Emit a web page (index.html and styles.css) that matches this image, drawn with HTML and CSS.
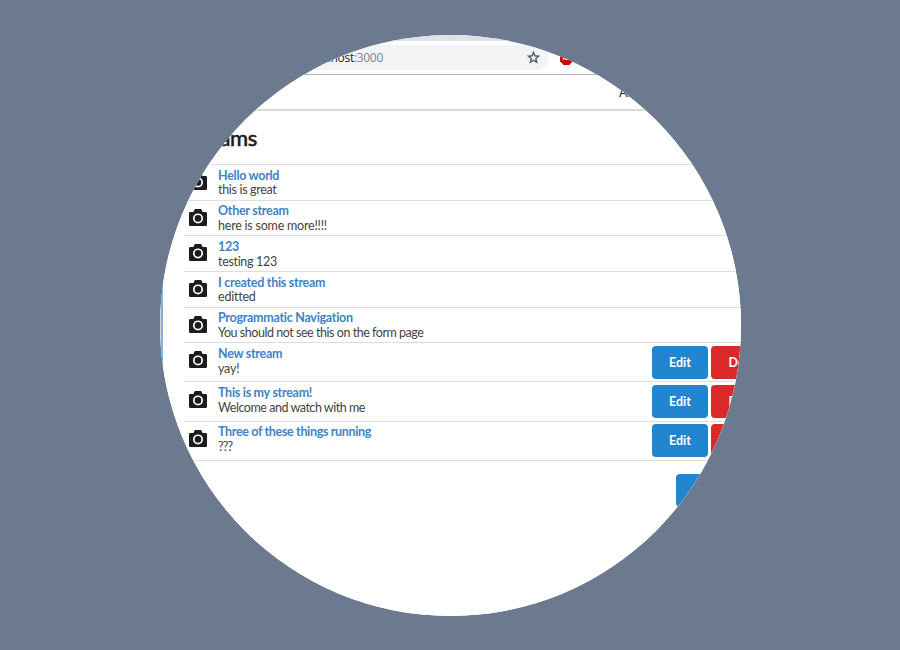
FILE: index.html
```html
<!DOCTYPE html>
<html lang="en">
<head>
<meta charset="utf-8">
<title>Streams</title>
<link rel="stylesheet" href="styles.css">
</head>
<body>
<svg class="defs" width="0" height="0">
  <symbol id="camera" viewBox="0 0 18 17">
    <path fill-rule="evenodd" fill="#1b1c1d" d="M1.3 3H4.4L5.4.8Q5.7.1 6.4.1H11.6Q12.3.1 12.6.8L13.6 3H16.7Q18 3 18 4.3V15.7Q18 17 16.7 17H1.3Q0 17 0 15.7V4.3Q0 3 1.3 3ZM9 4.4A5 5 0 1 0 9 14.4A5 5 0 1 0 9 4.4ZM9 6.1A3.3 3.3 0 1 1 9 12.7A3.3 3.3 0 1 1 9 6.1Z"/>
  </symbol>
</svg>
<div class="lens">
  <div class="tabs"></div>
  <div class="toolbar">
    <div class="address"><span class="url">localhost<span class="port">:3000</span></span>
      <svg class="star" viewBox="0 0 24 24"><path fill="#4f5358" stroke="#4f5358" stroke-width=".6" d="M22 9.24l-7.19-.62L12 2 9.19 8.63 2 9.24l5.46 4.73L5.82 21 12 17.27 18.18 21l-1.63-7.03L22 9.24zM12 15.4l-3.76 2.27 1-4.28-3.32-2.88 4.38-.38L12 6.1l1.71 4.04 4.38.38-3.32 2.88 1 4.28L12 15.4z"/></svg>
    </div>
    <svg class="blocker" viewBox="0 0 14 14"><path fill="#d00000" d="M4 0H10L14 4V10L10 14H4L0 10V4Z"/><path fill="none" stroke="#fff" stroke-width="1.3" d="M3 8L5 6L6 8H8L9 6L11 8"/></svg>
  </div>
  <div class="page">
    <div class="nav"><span>All Streams</span></div>
    <div class="content">
      <h2>Streams</h2>
      <div class="list">
        <div class="item"><svg class="cam"><use href="#camera"/></svg><div class="text"><a>Hello world</a><p>this is great</p></div></div>
        <div class="item"><svg class="cam"><use href="#camera"/></svg><div class="text"><a>Other stream</a><p class="loose">here is some more!!!!</p></div></div>
        <div class="item"><svg class="cam"><use href="#camera"/></svg><div class="text"><a>123</a><p>testing 123</p></div></div>
        <div class="item"><svg class="cam"><use href="#camera"/></svg><div class="text"><a>I created this stream</a><p class="loose">editted</p></div></div>
        <div class="item"><svg class="cam"><use href="#camera"/></svg><div class="text"><a>Programmatic Navigation</a><p class="tight">You should not see this on the form page</p></div></div>
        <div class="item own"><svg class="cam"><use href="#camera"/></svg><div class="text"><a>New stream</a><p class="loose">yay!</p></div><div class="btn">Edit</div><div class="btn red">Delete</div></div>
        <div class="item own"><svg class="cam"><use href="#camera"/></svg><div class="text"><a>This is my stream!</a><p class="tight">Welcome and watch with me</p></div><div class="btn">Edit</div><div class="btn red">Delete</div></div>
        <div class="item own"><svg class="cam"><use href="#camera"/></svg><div class="text"><a class="long">Three of these things running</a><p class="tight wide-marks">???</p></div><div class="btn">Edit</div><div class="btn red">Delete</div></div>
      </div>
      <div class="create"><div class="btn wide">Create Stream</div></div>
    </div>
  </div>
</div>
</body>
</html>
```
FILE: styles.css
```css
* { box-sizing: border-box; }
body { margin: 0; height: 650px; overflow: hidden; background: #6c7a90; padding: 35px 0 0 160px; font: 12.5px/15px Lato, sans-serif; color: #444; }
.defs { display: block; }
.lens { width: 581px; height: 581px; border-radius: 50%; overflow: hidden; background: #fff; }
.tabs { height: 6px; background: #dee1e6; }
.toolbar { height: 34px; display: flex; align-items: flex-start; padding-top: 4px; border-bottom: 1px solid #b4b5b7; }
.address { width: 389px; height: 25px; background: #f1f3f4; border-radius: 0 13px 13px 0; display: flex; align-items: center; justify-content: space-between; padding: 0 8px 0 146px; flex: none; }
.url { font: 12px/25px "Open Sans", sans-serif; color: #222; width: 77px; display: flex; justify-content: flex-end; letter-spacing: -.3px; }
.port { color: #80868b; }
.star { width: 15px; height: 15px; }
.blocker { width: 13px; height: 13px; margin: 7px 0 0 11px; flex: none; }
.page { height: 541px; background: linear-gradient(90deg, #d5d2ce 1px, #79b4e6 1px, #79b4e6 3px, #fff 3px); }
.nav { height: 36px; border-bottom: 2px solid #d9d9da; padding: 10px 0 0 459px; white-space: nowrap; color: #222; }
.content { padding: 13px 0 0 24px; }
h2 { margin: 0; width: 73px; font: 22px/28px Lato, sans-serif; letter-spacing: -.35px; -webkit-text-stroke: .6px #1b1c1d; color: #1b1c1d; display: flex; justify-content: flex-end; }
.list { margin-top: 12px; width: 620px; border-bottom: 1px solid #dededf; }
.item { height: 35.65px; border-top: 1px solid #dededf; display: flex; }
.item.own { height: 39.2px; }
.cam { width: 18px; height: 17px; margin: 8.2px 11px 0 5px; flex: none; }
.text { width: 434px; padding-top: 3.8px; line-height: 14.6px; flex: none; }
.text a { display: block; font-weight: bold; color: #4183c4; letter-spacing: -.28px; }
.text a.long { letter-spacing: -.34px; }
.text p { margin: 0; letter-spacing: -.32px; }
.text p.loose { letter-spacing: -.22px; }
.text p.tight { letter-spacing: -.46px; }
.text p.wide-marks { letter-spacing: -.9px; }
.btn { width: 56px; height: 33px; margin: 2.7px 3px 0 0; border-radius: 4px; background: #2185d0; color: #fff; font: bold 12.5px/34px Lato, sans-serif; text-align: center; flex: none; }
.btn.red { width: 72px; background: #db2828; }
.create { padding: 11px 0 0 492px; }
.btn.wide { width: 120px; }
```
